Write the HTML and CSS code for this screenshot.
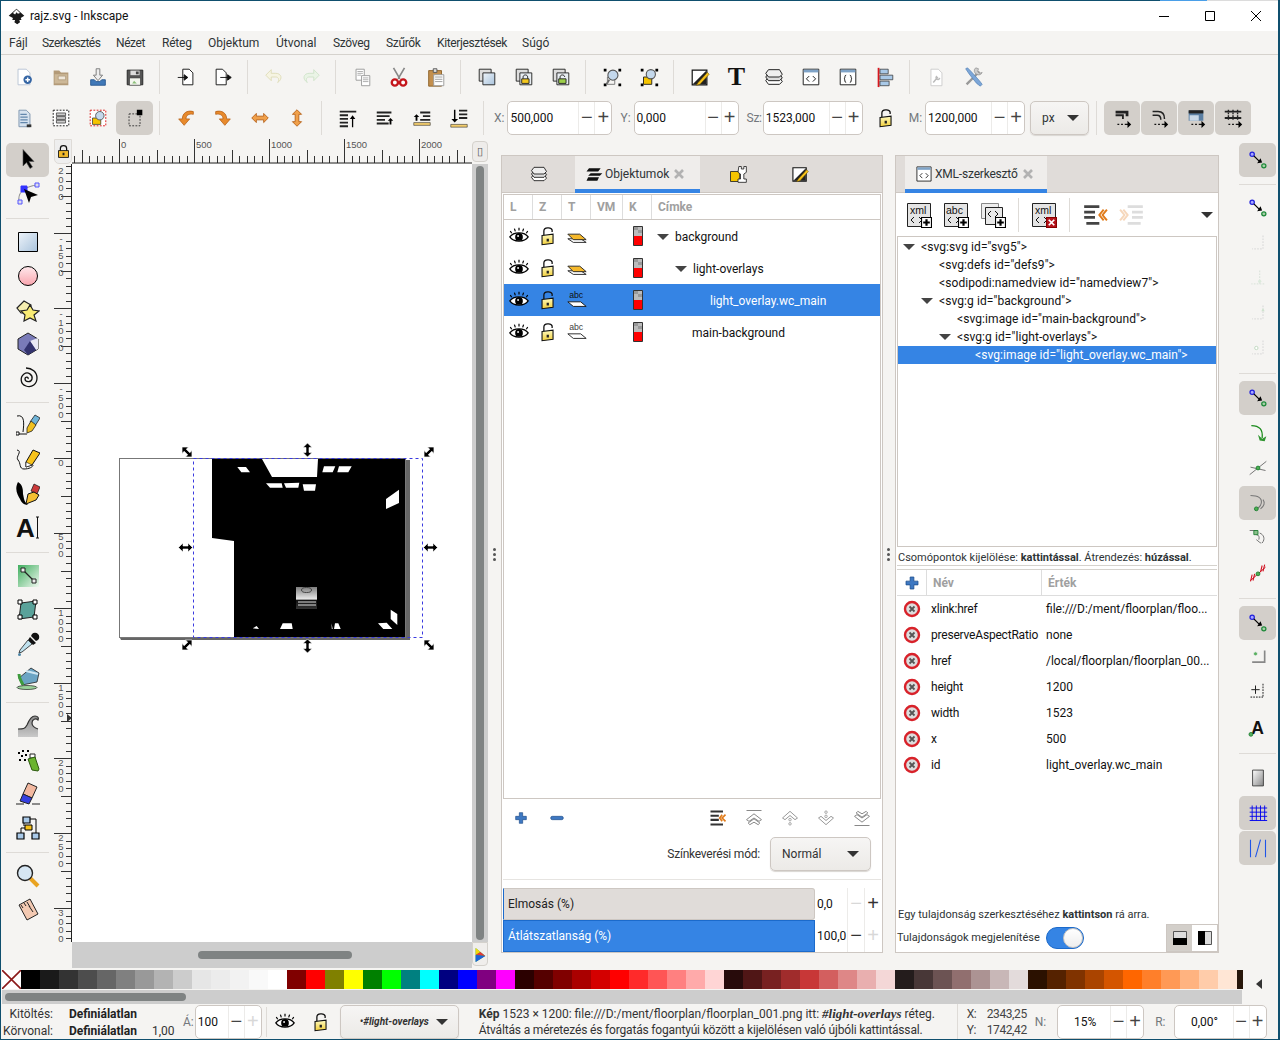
FILE: index.html
```html
<!DOCTYPE html>
<html lang="hu">
<head>
<meta charset="utf-8">
<title>rajz.svg - Inkscape</title>
<link rel="stylesheet" href="styles.css">
</head>
<body>
<svg class="defs" xmlns="http://www.w3.org/2000/svg">
<defs>
<linearGradient id="gb" x1="0" y1="0" x2="1" y2="1"><stop offset="0" stop-color="#eef4fa"/><stop offset="1" stop-color="#a9c3dc"/></linearGradient>
<linearGradient id="gg" x1="0" y1="0" x2="1" y2="1"><stop offset="0" stop-color="#3fae5e"/><stop offset="1" stop-color="#f0f8f0"/></linearGradient>
<linearGradient id="gy" x1="0" y1="0" x2="0" y2="1"><stop offset="0" stop-color="#fffbc0"/><stop offset="1" stop-color="#f2cf3a"/></linearGradient>
<linearGradient id="gr" x1="0" y1="0" x2="0" y2="1"><stop offset="0" stop-color="#ffe9ec"/><stop offset="1" stop-color="#f9a5ae"/></linearGradient>
<linearGradient id="gw" x1="0" y1="0" x2="0" y2="1"><stop offset="0" stop-color="#8c8c8c"/><stop offset="1" stop-color="#c9c9c9"/></linearGradient>
<linearGradient id="gs" x1="0" y1="0" x2="1" y2="1"><stop offset="0" stop-color="#fff"/><stop offset="1" stop-color="#888"/></linearGradient>
<linearGradient id="gp" x1="0" y1="0" x2="0" y2="1"><stop offset="0" stop-color="#7d7d7d"/><stop offset=".55" stop-color="#e8e8e8"/><stop offset=".6" stop-color="#111"/><stop offset="1" stop-color="#333"/></linearGradient>
<pattern id="rh" x="119" y="140" width="75" height="25" patternUnits="userSpaceOnUse"><path d="M0 0h1v24H0zM8 17h1v7H8zM15 17h1v7h-1zM23 17h1v7h-1zM30 17h1v7h-1zM38 11h1v13h-1zM45 17h1v7h-1zM53 17h1v7h-1zM60 17h1v7h-1zM68 17h1v7h-1z" fill="#333"/></pattern>
<pattern id="rv" x="54" y="159" width="18" height="75" patternUnits="userSpaceOnUse"><path d="M0 0h18v1H0zM12 8h6v1h-6zM12 15h6v1h-6zM12 23h6v1h-6zM12 30h6v1h-6zM7 38h11v1H7zM12 45h6v1h-6zM12 53h6v1h-6zM12 60h6v1h-6zM12 68h6v1h-6z" fill="#333"/></pattern>
<path id="ha" d="M-7 0-2.500-4.500V-1.500H2.500V-4.500L7 0 2.500 4.500V1.500H-2.500V4.500Z" fill="#000" stroke="#fff" stroke-width=".6"/>
</defs>
<symbol id="eye" viewBox="0 0 24 24"><path d="M2 13c4-6 16-6 20 0-4 6-16 6-20 0z" fill="#fff" stroke="#000" stroke-width="1.400"/><circle cx="12" cy="13" r="4.200"/><circle cx="11" cy="12" r="1" fill="#fff"/><path d="M4 9 2.500 6.500M8 7 7 4M12 6V3M16 7l1-3M20 9l1.500-2.500" stroke="#000" stroke-width="1.300"/></symbol>
<symbol id="lock" viewBox="0 0 24 24"><path d="M7.500 12V6.500c0-4 8-4.500 9-1v2" fill="none" stroke="#111" stroke-width="1.400"/><path d="M5.500 11.500l12-1.500v10l-12 1.500z" fill="url(#gy)" stroke="#111" stroke-width="1.200"/><path d="M10.500 15h2.500v3h-2.500z" fill="#222"/></symbol>
<symbol id="lockc" viewBox="0 0 24 24"><path d="M7 11V7c0-6 10-6 10 0v4" fill="none" stroke="#111" stroke-width="2"/><path d="M4 10.500h16v11H4z" fill="#f2b92a" stroke="#111" stroke-width="1.400"/><path d="M10.500 14h3v4h-3z" fill="#222"/></symbol>
<symbol id="layer" viewBox="0 0 24 24"><path d="M2 15h14l6 4H8z" fill="#fff" stroke="#222"/><path d="M2 10h13l7 6H8z" fill="#f5b82a" stroke="#222"/></symbol>
<symbol id="cbar" viewBox="0 0 10 20"><path d="M.5.5h9v19h-9z" fill="#bbb" stroke="#333"/><path d="M1 10h8v9H1z" fill="#f00"/><path d="M1 1h4v3H1zM5 4h4v3H5z" fill="#999"/></symbol>
<symbol id="new" viewBox="0 0 24 24"><path d="M5.500 3.500h9l4 4v13h-13z" fill="#fff" stroke="#b7c3d4"/><circle cx="16" cy="15" r="4.600" fill="#3465a4"/><path d="M16 12.500v5M13.500 15h5" stroke="#fff" stroke-width="1.600"/></symbol>
<symbol id="open" viewBox="0 0 24 24"><path d="M4 5h6l2 2h8v14H4z" fill="#b39a78"/><path d="M5 9h14v10H5z" fill="#cdb898"/><path d="M9 11h8v4H9z" fill="#efe7da" stroke="#9c8464" stroke-width=".6"/></symbol>
<symbol id="imp" viewBox="0 0 24 24"><path d="M10 3h4v7h3l-5 6-5-6h3z" fill="#eee" stroke="#777"/><path d="M4 15h4l2 2h4l2-2h4v6H4z" fill="#3f78b8" stroke="#2d5b92"/></symbol>
<symbol id="save" viewBox="0 0 24 24"><path d="M3.500 4.500h17v16h-17z" fill="#555" stroke="#222"/><path d="M7 5h10v5H7z" fill="#ddd"/><path d="M13 6h3v3h-3z" fill="#444"/><path d="M6 13h12v8H6z" fill="#f3f6ef" stroke="#333" stroke-width=".7"/><path d="M11 16l3 3h-5z" fill="#8cc07a"/></symbol>
<symbol id="pgin" viewBox="0 0 24 24"><path d="M8.500 3.500h7l4 4v13h-11z" fill="#fff" stroke="#111"/><path d="M3 12.500h10M10 9.500l4 3-4 3z" stroke="#111" fill="#111"/></symbol>
<symbol id="pgout" viewBox="0 0 24 24"><path d="M4.500 3.500h7l4 4v13h-11z" fill="#fff" stroke="#111"/><path d="M9 12.500h10M17 9.500l4 3-4 3z" stroke="#111" fill="#111"/></symbol>
<symbol id="undo" viewBox="0 0 24 24"><path d="M9 4 3 10l6 6v-4h5c3 0 4 3 2 6 6-4 4-10-2-10H9z" fill="#f6f4e2" stroke="#dedcb8"/></symbol>
<symbol id="redo" viewBox="0 0 24 24"><path d="M15 4l6 6-6 6v-4h-5c-3 0-4 3-2 6-6-4-4-10 2-10h5z" fill="#eaf4e6" stroke="#cfe2c9"/></symbol>
<symbol id="copy" viewBox="0 0 24 24"><path d="M5.500 3.500h9v12h-9z" fill="#fff" stroke="#999"/><path d="M11.500 10.500h9v11h-9z" fill="#fff" stroke="#999"/><path d="M7 6h6M7 8h6M7 10h4M13 13h6M13 15h6M13 17h6" stroke="#aaa"/></symbol>
<symbol id="cut" viewBox="0 0 24 24"><path d="M6 2l7 12M18 2 11 14" stroke="#888" stroke-width="1.800"/><circle cx="7.500" cy="18" r="3.400" fill="#fff" stroke="#c4161c" stroke-width="2.600"/><circle cx="16.500" cy="18" r="3.400" fill="#fff" stroke="#c4161c" stroke-width="2.600"/></symbol>
<symbol id="paste" viewBox="0 0 24 24"><path d="M4 5h14v17H4z" fill="#c38f4e" stroke="#8c6228"/><path d="M9 3h4v4H9z" fill="#ddd" stroke="#555"/><path d="M9.500 9.500h11v12h-11z" fill="#fff" stroke="#999"/><path d="M11 12h8M11 14.500h8M11 17h8" stroke="#999"/></symbol>
<symbol id="dup" viewBox="0 0 24 24"><path d="M3.500 3.500h13v13h-13z" fill="#ddd" stroke="#222"/><path d="M7.500 7.500h13v13h-13z" fill="url(#gb)" stroke="#222"/></symbol>
<symbol id="clone" viewBox="0 0 24 24"><path d="M3.500 3.500h13v13h-13z" fill="#ddd" stroke="#222"/><path d="M7.500 7.500h13v13h-13z" fill="#e8edf2" stroke="#222"/><path d="M11 14v-2c0-3 5-3 5 0v2" fill="none" stroke="#222"/><path d="M9.500 14h8v5h-8z" fill="#f4c81e" stroke="#222"/></symbol>
<symbol id="unlink" viewBox="0 0 24 24"><path d="M3.500 3.500h13v13h-13z" fill="#ddd" stroke="#222"/><path d="M7.500 7.500h13v13h-13z" fill="#e8edf2" stroke="#222"/><path d="M11 14v-2c0-3 5-3 5 0" fill="none" stroke="#222"/><path d="M9.500 14h8v5h-8z" fill="#9dcf4a" stroke="#222"/></symbol>
<symbol id="zsel" viewBox="0 0 24 24"><path d="M3 3h3v3H3zM19 3h3v3h-3zM3 19h3v3H3zM19 19h3v3h-3z"/><path d="M6 20l3-5" stroke="#666" stroke-width="2"/><path d="M7 12h8v8H7z" fill="none" stroke="#777"/><circle cx="13" cy="10" r="5.500" fill="#c4d8ec" stroke="#555" stroke-width="1.200"/></symbol>
<symbol id="zdraw" viewBox="0 0 24 24"><path d="M3 3h3v3H3zM19 3h3v3h-3zM3 19h3v3H3zM19 19h3v3h-3z"/><path d="M6 12h9v8H6z" fill="#f5c400" stroke="#222"/><circle cx="14" cy="9" r="5" fill="#c4d8ec" stroke="#555" stroke-width="1.200"/></symbol>
<symbol id="fs" viewBox="0 0 24 24"><path d="M3.500 4.500h16v16h-16z" fill="#fff" stroke="#111" stroke-width="1.300"/><path d="M4 20 19 5v15z" fill="#222"/><path d="M10 18 20 7l2 2-10 11-4 1z" fill="#f7c21a" stroke="#6a5000" stroke-width=".6"/></symbol>
<symbol id="layers" viewBox="0 0 24 24"><path d="M3 16l3-4h12l3 5-3 3H6z" fill="#fff" stroke="#111"/><path d="M3 12l3-4h12l3 5-3 3H6z" fill="#ddd" stroke="#111"/><path d="M3 8l3-4h12l3 5-3 3H6z" fill="#eee" stroke="#111"/></symbol>
<symbol id="xml" viewBox="0 0 24 24"><path d="M3.500 3.500h17v17h-17z" fill="#fff" stroke="#111"/><path d="M4 4h16v3H4z" fill="#7fa3c7"/><path d="M10 11l-3 3 3 3M14 11l3 3-3 3" fill="none" stroke="#111"/></symbol>
<symbol id="css" viewBox="0 0 24 24"><path d="M3.500 3.500h17v17h-17z" fill="#fff" stroke="#111"/><path d="M4 4h16v3H4z" fill="#7fa3c7"/><path d="M10 10c-2 0-1 3-2 4 1 1 0 4 2 4M14 10c2 0 1 3 2 4-1 1 0 4-2 4" fill="none" stroke="#111"/></symbol>
<symbol id="align" viewBox="0 0 24 24"><path d="M4 2h2v21H4z" fill="#d8171d"/><path d="M6.500 3.500h9v5h-9z" fill="#a9c9e8" stroke="#333" stroke-width=".8"/><path d="M6.500 10h14v5h-14z" fill="#a9c9e8" stroke="#333" stroke-width=".8"/><path d="M6.500 16.500h10v5h-10z" fill="#a9c9e8" stroke="#333" stroke-width=".8"/></symbol>
<symbol id="docp" viewBox="0 0 24 24"><path d="M6.500 3.500h8l4 4v14h-12z" fill="#fff" stroke="#ccc"/><path d="M9 18l5-6M13 11a2 2 0 1 0 3 2" fill="none" stroke="#bbb" stroke-width="1.600"/></symbol>
<symbol id="prefs" viewBox="0 0 24 24"><path d="M5 20 19 6" stroke="#999" stroke-width="2.500"/><path d="M15 2a4 4 0 0 0 1 7 4 4 0 0 0 6-2l-3 1-2-2 1-3z" fill="#ccc" stroke="#888" stroke-width=".7"/><path d="M4 3l2-1 4 4 9 10 3 4-2 2-4-3L8 9z" fill="#7ca6d8" stroke="#4c7cb0" stroke-width=".7"/></symbol>
<symbol id="selall" viewBox="0 0 24 24"><path d="M6.500 3.500h8l4 4v14h-12z" fill="#d6e2ef" stroke="#7c94ae"/><path d="M8 8h7M8 11h8M8 14h8M8 17h8" stroke="#6286ac" stroke-width="1.300"/><path d="M15 19h5v3h-5z" fill="#333"/></symbol>
<symbol id="sellay" viewBox="0 0 24 24"><path d="M3.500 3.500h17v17h-17z" fill="#fff" stroke="#111" stroke-dasharray="2 1.500"/><path d="M7 6.500h10v3H7zM7 10.500h10v3H7zM7 14.500h10v3H7z" fill="#ccc" stroke="#333" stroke-width=".8"/></symbol>
<symbol id="selsame" viewBox="0 0 24 24"><path d="M3.500 3.500h17v17h-17z" fill="#fff" stroke="#d11" stroke-dasharray="2 1.500"/><path d="M6 12h9v7H6z" fill="#f5c400" stroke="#333" stroke-width=".8"/><circle cx="14" cy="9.500" r="4.600" fill="#c4d8ec" stroke="#555"/></symbol>
<symbol id="selto" viewBox="0 0 24 24"><path d="M5.500 7.500h12v13h-12z" fill="none" stroke="#333" stroke-dasharray="2 1.500"/><path d="M14 3h6v6h-6z"/></symbol>
<symbol id="rccw" viewBox="0 0 24 24"><path d="M20 5c-7-2-12 2-12 8H4l6 7 6-7h-4c0-4 3-6 8-5z" fill="#e88a2c" stroke="#b25a10" stroke-width=".8"/></symbol>
<symbol id="rcw" viewBox="0 0 24 24"><path d="M4 5c7-2 12 2 12 8h4l-6 7-6-7h4c0-4-3-6-8-5z" fill="#e88a2c" stroke="#b25a10" stroke-width=".8"/></symbol>
<symbol id="fh" viewBox="0 0 24 24"><path d="M3 12l5-5v3h8V7l5 5-5 5v-3H8v3z" fill="#f0a04a" stroke="#b25a10" stroke-width=".9"/></symbol>
<symbol id="fv" viewBox="0 0 24 24"><path d="M12 3l5 5h-3v8h3l-5 5-5-5h3V8H7z" fill="#f0a04a" stroke="#b25a10" stroke-width=".9"/></symbol>
<symbol id="rtop" viewBox="0 0 24 24"><path d="M3 4h18v2H3zM3 8h9v2H3zM3 12h9v2H3zM3 16h9v2H3zM3 20h9v2H3z" fill="#222"/><path d="M17 9l3 4h-2.300v9h-1.400v-9H14z"/></symbol>
<symbol id="rup" viewBox="0 0 24 24"><path d="M3 5h16v2H3zM3 9h14v2H3zM3 13h9v2H3zM3 17h13v2H3z" fill="#222"/><path d="M18 12l3 3h-2v4h-2v-4h-2z"/></symbol>
<symbol id="rdn" viewBox="0 0 24 24"><path d="M10 5h11v2H10zM13 9h8v2h-8zM10 13h11v2H10z" fill="#222"/><path d="M3 17h18v3H3z" fill="#f3cd6d" stroke="#222" stroke-width=".6"/><path d="M6 8l-3 3h2v4h2v-4h2z"/></symbol>
<symbol id="rbot" viewBox="0 0 24 24"><path d="M12 3h9v2h-9zM12 7h9v2h-9zM12 11h9v2h-9z" fill="#222"/><path d="M3 19h18v3H3z" fill="#f3cd6d" stroke="#222" stroke-width=".6"/><path d="M6.500 3h1.600v10H11l-3.700 4-3.600-4h2.800z"/></symbol>
<symbol id="aff1" viewBox="0 0 24 24"><path d="M5 4h14v6h-3V7H5zM5 8h9v5h-2v-3H5z" fill="#222"/><path d="M7 19h2M11 19h2M15 19h4" stroke="#111" stroke-width="1.300"/><path d="M18 15l4 4-4 4z"/></symbol>
<symbol id="aff2" viewBox="0 0 24 24"><path d="M5 5h6c5 0 7 3 7 8M5 9h5c3 0 4 2 4 5" fill="none" stroke="#222" stroke-width="1.600"/><path d="M7 19h2M11 19h2M15 19h4" stroke="#111" stroke-width="1.300"/><path d="M18 15l4 4-4 4z"/></symbol>
<symbol id="aff3" viewBox="0 0 24 24"><path d="M4 4h16v11H4z" fill="#5b7fa3"/><path d="M5 9h10v6H5z" fill="#c9d8e7"/><path d="M4 3.500h16V7H4z" fill="#222"/><path d="M7 19h2M11 19h2M15 19h4" stroke="#111" stroke-width="1.300"/><path d="M18 15l4 4-4 4z"/></symbol>
<symbol id="aff4" viewBox="0 0 24 24"><path d="M3 4h18v2H3zM3 11h18v2H3z" fill="#222"/><path d="M7 3v12M12 3v12M17 3v12" stroke="#222" stroke-width="1.500" stroke-dasharray="2 1"/><path d="M7 19h2M11 19h2M15 19h4" stroke="#111" stroke-width="1.300"/><path d="M18 15l4 4-4 4z"/></symbol>
<symbol id="t-sel" viewBox="0 0 24 24"><path d="M7 1.500v16.500l3.500-3.500 3.500 6 2.500-1.500-3.500-5.500h5z" stroke="#555" stroke-width=".6"/></symbol>
<symbol id="t-node" viewBox="0 0 24 24"><path d="M3 20C2 12 5 6 20 3" fill="none" stroke="#888"/><path d="M5 4h6v6H5z" fill="#3333ff" stroke="#3333ff"/><path d="M2 18h4v4H2zM19 1h4v4h-4z" fill="#dde" stroke="#55f"/><path d="M8 7l5 14 2-6 7-2z"/></symbol>
<symbol id="t-rect" viewBox="0 0 24 24"><path d="M2.500 2.500h19v19h-19z" fill="url(#gb)" stroke="#000"/></symbol>
<symbol id="t-ell" viewBox="0 0 24 24"><circle cx="12" cy="12" r="9.500" fill="url(#gr)" stroke="#000"/></symbol>
<symbol id="t-star" viewBox="0 0 24 24"><path d="M1 10l7-7 7 4-1 8H5z" fill="#f6eeb0" stroke="#222" stroke-width="1.200"/><path d="M14 7l3 5 6 1-5 4 2 6-6-3-6 3 1-6-4-4 6-1z" fill="#f9ec74" stroke="#222" stroke-width="1.200"/></symbol>
<symbol id="t-3d" viewBox="0 0 24 24"><path d="M12 1l10 6v10l-10 6-10-6V7z" fill="#7a7bb8" stroke="#222"/><path d="M14 9l8-3v11l-2 1z" fill="#e8e8f4"/><path d="M8 18l6-9 6 9-8 5z" fill="#33336e"/></symbol>
<symbol id="t-spi" viewBox="0 0 24 24"><path d="M12 13c1-2-3-3-3 0s6 4 7 0-4-8-8-5-4 10 2 12 11-2 11-8S16 2 10 2" fill="none" stroke="#111" stroke-width="1.300"/></symbol>
<symbol id="t-pen" viewBox="0 0 24 24"><path d="M1 2c8-2 7 8 6 16" fill="none" stroke="#111"/><path d="M0 18h3v3H0z" fill="#fff" stroke="#111"/><path d="M3 20h8" stroke="#111"/><path d="M14 8l5-7 5 3-5 8z" fill="#6fb4d8" stroke="#222" stroke-width=".8"/><path d="M11 14l4-7 5 4-4 6-5 2z" fill="#f0c020" stroke="#222" stroke-width=".8"/></symbol>
<symbol id="t-pcl" viewBox="0 0 24 24"><path d="M1 2c6 1-2 7 1 10s1 9 6 9 9-2 9-4" fill="none" stroke="#111"/><path d="M10 14l7-12 7 3-8 12-6 2z" fill="#f7c21a" stroke="#111"/><path d="M10 14l6 3-6 2z" fill="#fff" stroke="#111" stroke-width=".6"/></symbol>
<symbol id="t-cal" viewBox="0 0 24 24"><path d="M2 0c-4 8 0 13 2 17 1 3 4 6 8 6-4-3-4-7-5-11 0-4 0-9-5-12z"/><path d="M15 9l3-7 6 3-3 7z" fill="#cc3a3a" stroke="#111" stroke-width=".7"/><path d="M10 22l2-10 6-2 5 3-3 5z" fill="#f5bf33" stroke="#111"/></symbol>
<symbol id="t-grad" viewBox="0 0 24 24"><path d="M2 1h21v22H2z" fill="url(#gg)"/><path d="M7 6l11 11" stroke="#222" stroke-width="1.300"/><path d="M5 4h4v4H5zM16 15h4v4h-4z" fill="#eee" stroke="#222"/></symbol>
<symbol id="t-mesh" viewBox="0 0 24 24"><path d="M5 5l15-2-2 16-15 2z" fill="#5aa29a" stroke="#222"/><path d="M2 2h4v4H2zM17 2h4v4h-4zM2 17h4v4H2zM17 17h4v4h-4z" fill="#fff" stroke="#000"/></symbol>
<symbol id="t-drop" viewBox="0 0 24 24"><path d="M14 5l6 6-3 2-5-5z" fill="#111"/><path d="M16 2a3 3 0 0 1 6 6l-2 1-5-5z" fill="#111"/><path d="M12 8l4 4-10 8-3 1 1-3z" fill="#bfe1ee" stroke="#222" stroke-width=".8"/><ellipse cx="3.500" cy="22.500" rx="1.500" ry="1.500" fill="#4f86a6"/></symbol>
<symbol id="t-fill" viewBox="0 0 24 24"><path d="M3 12l3 7 15-3 2-9-8-5z" fill="#6ba4c4" stroke="#222" stroke-width=".8"/><path d="M10 5l12 3" stroke="#cfe6f2" stroke-width="2"/><path d="M3 8c0 5 2 6 4 11" fill="none" stroke="#3e9b3e" stroke-width="3"/><ellipse cx="11" cy="21.500" rx="10" ry="2" fill="#9ad29a" stroke="#222" stroke-width=".7"/></symbol>
<symbol id="t-twk" viewBox="0 0 24 24"><path d="M2 23V15c5 0 7 0 9-4 2-5 4-9 8-9 3 0 4 2 3 4-2-2-6-1-6 3 0 3 3 5 6 6v8z" fill="url(#gw)"/><path d="M2 15c5 0 7 0 9-4 2-5 4-9 8-9 3 0 4 2 3 4-2-2-6-1-6 3 0 3 3 5 6 6" fill="none" stroke="#333" stroke-width="1.200"/></symbol>
<symbol id="t-spr" viewBox="0 0 24 24"><path d="M2 4h2v2H2zM6 2h2v2H6zM5 7h2v2H5zM9 6h2v2H9zM3 11h2v2H3zM8 11h2v2H8zM11 2h2v2h-2z"/><path d="M14 6h5v4h-5z" fill="#fff" stroke="#222"/><path d="M12 11l7-2 4 12-1 2-6-1z" fill="#6ab42e" stroke="#2d5a10"/></symbol>
<symbol id="t-era" viewBox="0 0 24 24"><path d="M12 1l9 4-5 11-9-4z" fill="#f2b8a0" stroke="#222"/><path d="M7 12l9 4-3 6-9-3z" fill="#3640e0" stroke="#222"/><path d="M0 22h8M16 22h8" stroke="#222"/></symbol>
<symbol id="t-conn" viewBox="0 0 24 24"><path d="M7 1h7v6H7zM1 17h7v6H1zM16 17h7v6h-7z" fill="#a9c9e8" stroke="#000" stroke-width="1.200"/><path d="M9 9h7v5H9z" fill="#f7c21a" stroke="#000"/><path d="M8 7v3M5 17v-5h4M14 3h6v14" fill="none" stroke="#000"/></symbol>
<symbol id="t-zoom" viewBox="0 0 24 24"><path d="M14 14l8 8" stroke="#e9a321" stroke-width="4"/><circle cx="9" cy="9" r="7.500" fill="#d6e6f3" stroke="#222" stroke-width="1.400"/></symbol>
<symbol id="t-meas" viewBox="0 0 24 24"><path d="M3 7l11-6 8 15-11 6z" fill="#f3c9b2" stroke="#222"/><path d="M5 7l2 3M8 5l2 3M11 4l3 5M13 8l2 3M15 11l2 3" stroke="#222"/></symbol>
<symbol id="pl" viewBox="0 0 24 24"><path d="M9.500 4h5v5.500H20v5h-5.500V20h-5v-5.500H4v-5h5.500z" fill="#3e78c2" stroke="#1c4c8a"/></symbol>
<symbol id="mn" viewBox="0 0 24 24"><path d="M5 9.500h14a2 2 0 0 1 0 5H5a2 2 0 0 1 0-5z" fill="#3e78c2" stroke="#1c4c8a"/></symbol>
<symbol id="wnd" viewBox="0 0 24 24"><path d="M3 3h15v2.500H3zM3 8h10v2.500H3zM3 13h10v2.500H3zM3 18.500h15V21H3z" fill="#333"/><path d="M21 8l-4 4 4 4M17 8l-3 4 3 4" fill="none" stroke="#e07b1a" stroke-width="2"/></symbol>
<symbol id="otop" viewBox="0 0 24 24"><path d="M3 3h18M12 7l9 7-3 2-6-4-6 4-3-2zM12 13l7 5-2 2-5-3-5 3-2-2z" fill="#fff" stroke="#888" stroke-width="1.200"/></symbol>
<symbol id="oup" viewBox="0 0 24 24"><path d="M12 4l9 8-3 2-6-5-6 5-3-2z" fill="#fff" stroke="#999" stroke-width="1.200"/><circle cx="12" cy="14" r="1.500" fill="#fff" stroke="#999"/><circle cx="12" cy="19" r="1.500" fill="#fff" stroke="#999"/></symbol>
<symbol id="odn" viewBox="0 0 24 24"><path d="M12 20l9-8-3-2-6 5-6-5-3 2z" fill="#fff" stroke="#999" stroke-width="1.200"/><circle cx="12" cy="10" r="1.500" fill="#fff" stroke="#999"/><circle cx="12" cy="5" r="1.500" fill="#fff" stroke="#999"/></symbol>
<symbol id="obot" viewBox="0 0 24 24"><path d="M3 21h18M12 17l9-7-3-2-6 4-6-4-3 2zM12 11l7-5-2-2-5 3-5-3-2 2z" fill="#fff" stroke="#888" stroke-width="1.200"/></symbol>
<symbol id="objs" viewBox="0 0 24 24"><path d="M6 5h14l-3 4H3zM8 11h14l-3 3H5zM5 16h13l-2 4H3z" fill="#111"/></symbol>
<symbol id="objp" viewBox="0 0 24 24"><path d="M3 9h11v12H3z" fill="#f5c400" stroke="#222"/><path d="M13 3h3v3h3V3h3v7l-3 2v6h3v4H12v-4h3v-6l-3-2z" fill="#fff" stroke="#222"/></symbol>
<symbol id="xd" viewBox="0 0 26 26"><path d="M1.500 1.500h17v15h-17z" fill="#eee" stroke="#888"/><path d="M5.500 5.500h17v17h-17z" fill="#e8e8e8" stroke="#222"/><path d="M11 9l-3 3 3 3M15 9l3 3-3 3" fill="none" stroke="#111"/></symbol>
<symbol id="badge" viewBox="0 0 10 10"><path d="M.5.5h9v9h-9z" fill="#fff" stroke="#000"/><path d="M4 2h2v2h2v2H6v2H4V6H2V4h2z"/></symbol>
<symbol id="xdel" viewBox="0 0 10 10"><path d="M.5.5h9v9h-9z" fill="#b5121b" stroke="#800"/><path d="M2.500 2.500l5 5M7.500 2.500l-5 5" stroke="#fff" stroke-width="1.600"/></symbol>
<symbol id="un" viewBox="0 0 24 24"><path d="M2 3h14v2.500H2zM2 8h10v2.500H2zM2 13h10v2.500H2zM4 18.500h12V21H4z" fill="#444"/><path d="M20 7l-4 5 4 5M23 7l-4 5 4 5" fill="none" stroke="#e07b1a" stroke-width="1.800"/></symbol>
<symbol id="in" viewBox="0 0 24 24"><path d="M8 3h14v2.500H8zM12 8h10v2.500H12zM12 13h10v2.500H12zM8 18.500h12V21H8z" fill="#ddd"/><path d="M4 7l4 5-4 5M1 7l4 5-4 5" fill="none" stroke="#f6d7bb" stroke-width="1.800"/></symbol>
<symbol id="del" viewBox="0 0 24 24"><circle cx="12" cy="12" r="7" fill="#ddd" stroke="#d8222a" stroke-width="2.400"/><path d="M9.500 9.500l5 5M14.500 9.500l-5 5" stroke="#555" stroke-width="1.800"/></symbol>
<symbol id="s-main" viewBox="0 0 24 24"><circle cx="5" cy="5" r="2.600" fill="#a8a8ff" stroke="#2222dd" stroke-width="1.500"/><circle cx="19" cy="19" r="2.500" fill="#a8d0a8" stroke="#1f8a3a" stroke-width="1.500"/><path d="M7 7l7 7"  stroke="#000" stroke-width="1.500"/><path d="M11 16l6-1-2-5z"/></symbol>
<symbol id="s-f1" viewBox="0 0 24 24"><path d="M18 3v16H5" fill="none" stroke="#ddd" stroke-dasharray="2 1.500" stroke-width="1.500"/></symbol>
<symbol id="s-f2" viewBox="0 0 24 24"><path d="M14 3v16H4M14 19h7" fill="none" stroke="#dde5dd" stroke-dasharray="2 1.500" stroke-width="1.500"/><circle cx="14" cy="16" r="2" fill="#dceadc"/></symbol>
<symbol id="s-f3" viewBox="0 0 24 24"><path d="M18 3v16H5" fill="none" stroke="#ddd" stroke-dasharray="2 1.500" stroke-width="1.500"/><path d="M18 6l2 4h-4z" fill="#cfe3cf"/></symbol>
<symbol id="s-f4" viewBox="0 0 24 24"><path d="M18 3v16H5" fill="none" stroke="#ddd" stroke-dasharray="2 1.500" stroke-width="1.500"/><circle cx="10" cy="12" r="2" fill="#fff" stroke="#b8d4b8"/></symbol>
<symbol id="s-p" viewBox="0 0 24 24"><path d="M4 3c10 0 14 5 13 15" fill="none" stroke="#1a8a1a" stroke-width="1.500"/><path d="M12 14l5 5 5-3-2 6-6-1z" fill="#1a8a1a" opacity=".9"/></symbol>
<symbol id="s-x" viewBox="0 0 24 24"><path d="M2 20 22 4M3 11l18 4" stroke="#777" stroke-width="1.200"/><circle cx="12" cy="12" r="2.300" fill="#4caf50" stroke="#177a2c"/></symbol>
<symbol id="s-c" viewBox="0 0 24 24"><path d="M3 3c9 0 14 3 13 9-1 5-5 7-7 7M18 8c3 4 1 8-3 11" fill="none" stroke="#777" stroke-width="1.300"/><circle cx="10" cy="19" r="2.300" fill="#4caf50" stroke="#177a2c"/></symbol>
<symbol id="s-b" viewBox="0 0 24 24"><path d="M2 3h8v5c3 0 4 3 3 6M14 6c5 2 7 7 3 12M10 14c3 2 4 4 6 4" fill="none" stroke="#777" stroke-width="1.200"/><path d="M7 3h5v5H7z" fill="#8ac08a" stroke="#177a2c"/></symbol>
<symbol id="s-r" viewBox="0 0 24 24"><path d="M3 21 21 5" stroke="#d01020" stroke-width="1.200"/><path d="M5 14l-2 8M8 13l-2 8M17 3l-2 8M20 2l-2 8" stroke="#d01020" stroke-width="1.300"/><circle cx="12" cy="13" r="2.300" fill="#4caf50" stroke="#177a2c"/></symbol>
<symbol id="s-pg" viewBox="0 0 24 24"><path d="M20 3v14H5" fill="none" stroke="#888" stroke-width="2"/><circle cx="9" cy="7" r="2.400" fill="#58b05f" stroke="#eee"/></symbol>
<symbol id="s-gd" viewBox="0 0 24 24"><path d="M9 3v10M4 8h10" stroke="#222" stroke-width="1.200"/><path d="M18 1v16M3 17h15" stroke="#777" stroke-width="2" stroke-dasharray="2 1.300"/></symbol>
<symbol id="s-page" viewBox="0 0 24 24"><path d="M5.500 2.500h13v19h-13z" fill="url(#gs)" stroke="#333"/></symbol>
<symbol id="s-grid" viewBox="0 0 24 24"><path d="M5 3v18M10 3v18M15 3v18M20 3v18M2 6h21M2 11h21M2 16h21M2 21h21" stroke="#0000ee" stroke-width="1.100"/></symbol>
<symbol id="s-guide" viewBox="0 0 24 24"><path d="M3 2v21M21 2v21M9 23 15 2" stroke="#1f55e8" stroke-width="1.300"/></symbol>
<symbol id="logo" viewBox="0 0 24 24"><path d="M12 1 23 11l-5 3 1 3h-3l1 3-4 3-4-3 1-3H6l1-3-6-3z" fill="#1a1a1a"/><path d="M12 2l5 5-3 1-2-2-2 3-3-2z" fill="#fff"/></symbol>
<symbol id="xic" viewBox="0 0 12 12"><path d="M2 2l8 8M10 2l-8 8" stroke="#b2b2b2" stroke-width="2.600"/></symbol>
</svg>

<div class="app">
<div class="edge"><span class="e1"></span><span class="e2"></span></div>
<header class="title">
<svg class="logo"><use href="#logo"/></svg>
<span class="ttext">rajz.svg - Inkscape</span>
<div class="wctl">
<svg class="wc" viewBox="0 0 46 30"><path d="M18 15.500h10" stroke="#000"/></svg>
<svg class="wc" viewBox="0 0 46 30"><path d="M18.500 10.500h9v9h-9z" fill="none" stroke="#000"/></svg>
<svg class="wc" viewBox="0 0 46 30"><path d="M18 10l10 10M28 10 18 20" stroke="#000"/></svg>
</div>
</header>
<nav class="menu"><span>Fájl</span><span>Szerkesztés</span><span>Nézet</span><span>Réteg</span><span>Objektum</span><span>Útvonal</span><span>Szöveg</span><span>Szűrők</span><span>Kiterjesztések</span><span>Súgó</span></nav>

<div class="tb tb1">
<i class="b"><svg><use href="#new"/></svg></i><i class="b"><svg><use href="#open"/></svg></i><i class="b"><svg><use href="#imp"/></svg></i><i class="b"><svg><use href="#save"/></svg></i>
<u class="sep"></u>
<i class="b"><svg><use href="#pgin"/></svg></i><i class="b"><svg><use href="#pgout"/></svg></i>
<u class="sep"></u>
<i class="b"><svg><use href="#undo"/></svg></i><i class="b"><svg><use href="#redo"/></svg></i>
<u class="sep"></u>
<i class="b"><svg><use href="#copy"/></svg></i><i class="b"><svg><use href="#cut"/></svg></i><i class="b"><svg><use href="#paste"/></svg></i>
<u class="sep"></u>
<i class="b"><svg><use href="#dup"/></svg></i><i class="b"><svg><use href="#clone"/></svg></i><i class="b"><svg><use href="#unlink"/></svg></i>
<u class="sep"></u>
<i class="b"><svg><use href="#zsel"/></svg></i><i class="b"><svg><use href="#zdraw"/></svg></i>
<u class="sep"></u>
<i class="b"><svg><use href="#fs"/></svg></i><i class="b"><span class="bigt">T</span></i><i class="b"><svg><use href="#layers"/></svg></i><i class="b"><svg><use href="#xml"/></svg></i><i class="b"><svg><use href="#css"/></svg></i><i class="b"><svg><use href="#align"/></svg></i>
<u class="sep"></u>
<i class="b"><svg><use href="#docp"/></svg></i><i class="b"><svg><use href="#prefs"/></svg></i>
</div>

<div class="tb tb2">
<i class="b"><svg><use href="#selall"/></svg></i><i class="b"><svg><use href="#sellay"/></svg></i><i class="b"><svg><use href="#selsame"/></svg></i><i class="b on"><svg><use href="#selto"/></svg></i>
<u class="sep"></u>
<i class="b"><svg><use href="#rccw"/></svg></i><i class="b"><svg><use href="#rcw"/></svg></i><i class="b"><svg><use href="#fh"/></svg></i><i class="b"><svg><use href="#fv"/></svg></i>
<u class="sep sep2"></u>
<i class="b"><svg><use href="#rtop"/></svg></i><i class="b"><svg><use href="#rup"/></svg></i><i class="b"><svg><use href="#rdn"/></svg></i><i class="b"><svg><use href="#rbot"/></svg></i>
<u class="sep sep3"></u>
<label class="lb lbx">X:</label><div class="spin sx"><span class="v">500,000</span><b class="m">−</b><b class="p">+</b></div>
<label class="lb">Y:</label><div class="spin sx"><span class="v">0,000</span><b class="m">−</b><b class="p">+</b></div>
<label class="lb lbs">Sz:</label><div class="spin swd"><span class="v">1523,000</span><b class="m">−</b><b class="p">+</b></div>
<i class="b blk"><svg><use href="#lock"/></svg></i>
<label class="lb lbm">M:</label><div class="spin swd"><span class="v">1200,000</span><b class="m">−</b><b class="p">+</b></div>
<div class="sel pxs"><span>px</span><em class="arr"></em></div>
<u class="sep sep4"></u>
<i class="b af on"><svg><use href="#aff1"/></svg></i><i class="b af on"><svg><use href="#aff2"/></svg></i><i class="b af on"><svg><use href="#aff3"/></svg></i><i class="b af on"><svg><use href="#aff4"/></svg></i>
</div>

<main class="main">
<aside class="lt">
<i class="t on"><svg><use href="#t-sel"/></svg></i>
<i class="t"><svg><use href="#t-node"/></svg></i>
<u class="hs"></u>
<i class="t"><svg><use href="#t-rect"/></svg></i><i class="t"><svg><use href="#t-ell"/></svg></i><i class="t"><svg><use href="#t-star"/></svg></i><i class="t"><svg><use href="#t-3d"/></svg></i><i class="t"><svg><use href="#t-spi"/></svg></i>
<u class="hs"></u>
<i class="t"><svg><use href="#t-pen"/></svg></i><i class="t"><svg><use href="#t-pcl"/></svg></i><i class="t"><svg><use href="#t-cal"/></svg></i><i class="t"><svg class="tall" viewBox="0 -4 24 32"><text x="0" y="21" class="glyph-a">A</text><path d="M20 1h3M21.500 1v21M20 22h3" stroke="#111" fill="none"/></svg></i>
<u class="hs"></u>
<i class="t"><svg><use href="#t-grad"/></svg></i><i class="t"><svg><use href="#t-mesh"/></svg></i><i class="t"><svg><use href="#t-drop"/></svg></i><i class="t"><svg><use href="#t-fill"/></svg></i>
<u class="hs"></u>
<i class="t"><svg><use href="#t-twk"/></svg></i><i class="t"><svg><use href="#t-spr"/></svg></i><i class="t"><svg><use href="#t-era"/></svg></i><i class="t"><svg><use href="#t-conn"/></svg></i>
<u class="hs"></u>
<i class="t"><svg><use href="#t-zoom"/></svg></i><i class="t"><svg><use href="#t-meas"/></svg></i>
</aside>

<section class="cv">
<div class="lockb"><svg><use href="#lockc"/></svg></div>
<svg class="rh" viewBox="72 140 400 25">
<rect x="72" y="140" width="400" height="24" fill="url(#rh)"/><path d="M72 164h400" stroke="#222"/>
<g class="rt"><text x="121" y="149">0</text><text x="196" y="149">500</text><text x="271" y="149">1000</text><text x="346" y="149">1500</text><text x="421" y="149">2000</text></g>
</svg>
<div class="cms"><span class="cmsi">▯</span></div>
<svg class="rv" viewBox="54 165 18 778">
<rect x="54" y="165" width="18" height="778" fill="url(#rv)"/><path d="M71.500 165v778" stroke="#222"/>
<g class="rt vt">
<text x="61" y="175">2<tspan x="61" dy="8.500">0</tspan><tspan x="61" dy="8.500">0</tspan><tspan x="61" dy="8.500">0</tspan></text>
<text x="61" y="243">-<tspan x="61" dy="8.500">1</tspan><tspan x="61" dy="8.500">5</tspan><tspan x="61" dy="8.500">0</tspan><tspan x="61" dy="8.500">0</tspan></text>
<text x="61" y="318">-<tspan x="61" dy="8.500">1</tspan><tspan x="61" dy="8.500">0</tspan><tspan x="61" dy="8.500">0</tspan><tspan x="61" dy="8.500">0</tspan></text>
<text x="61" y="393">-<tspan x="61" dy="8.500">5</tspan><tspan x="61" dy="8.500">0</tspan><tspan x="61" dy="8.500">0</tspan></text>
<text x="61" y="467">0</text>
<text x="61" y="541">5<tspan x="61" dy="8.500">0</tspan><tspan x="61" dy="8.500">0</tspan></text>
<text x="61" y="617">1<tspan x="61" dy="8.500">0</tspan><tspan x="61" dy="8.500">0</tspan><tspan x="61" dy="8.500">0</tspan></text>
<text x="61" y="692">1<tspan x="61" dy="8.500">5</tspan><tspan x="61" dy="8.500">0</tspan><tspan x="61" dy="8.500">0</tspan></text>
<text x="61" y="767">2<tspan x="61" dy="8.500">0</tspan><tspan x="61" dy="8.500">0</tspan><tspan x="61" dy="8.500">0</tspan></text>
<text x="61" y="842">2<tspan x="61" dy="8.500">5</tspan><tspan x="61" dy="8.500">0</tspan><tspan x="61" dy="8.500">0</tspan></text>
<text x="61" y="917">3<tspan x="61" dy="8.500">0</tspan><tspan x="61" dy="8.500">0</tspan><tspan x="61" dy="8.500">0</tspan></text>
</g>
<path d="M67 715v8l5-4z" fill="#333"/>
</svg>
<svg class="art" viewBox="72 165 400 778">
<path d="M120 639h286V461h4v180H121z" fill="#666"/>
<rect x="119.500" y="459.500" width="286" height="179" fill="#fff" stroke="#777"/>
<path d="M212 460H262L272 478H317L318 460H405V638H234V542L212 539Z"/>
<path fill="#fff" d="M237.300 468H246L250 473.300H241.300ZM324 467.300H335.300L332.700 473.300H322.300ZM339 467.300H351.700L348.300 473.300H337.300ZM266 484.300H281.700L282.700 488.700H270ZM284 484.300 299.300 483.700 298.300 488.700H286ZM302.700 485.300H316L315 491.700H304ZM386 500 399 490.700V504L386 510ZM252.700 629.300 256.700 627 259 630ZM280 630 282.700 624.300H291.700L292.700 630ZM335 624.300H338.300L340.700 630H334ZM331.500 624.300 332.700 630H331.800ZM378 624.300 386.700 623.700 392.300 630H383.300ZM390.700 610.700 397.300 615V626L390.700 620Z"/>
<rect x="296" y="588" width="21" height="22" fill="url(#gp)"/>
<ellipse cx="306.500" cy="591" rx="5" ry="2.500" fill="none" stroke="#444"/><path d="M298 603h18M298 606h18" stroke="#ddd"/>
<rect x="193.500" y="459.500" width="229" height="179" fill="none" stroke="#3a3ae0" stroke-dasharray="3 3"/>
<use href="#ha" transform="translate(187 453) rotate(45)"/>
<use href="#ha" transform="translate(429 453) rotate(-45)"/>
<use href="#ha" transform="translate(187 646) rotate(-45)"/>
<use href="#ha" transform="translate(429 646) rotate(45)"/>
<use href="#ha" transform="translate(307.500 451) rotate(90)"/>
<use href="#ha" transform="translate(307.500 647) rotate(90)"/>
<use href="#ha" transform="translate(185.500 548.500)"/>
<use href="#ha" transform="translate(430.500 548.500)"/>
</svg>
<div class="vs"><em></em></div>
<div class="gutter"></div>
<div class="hsb"><em></em></div>
<div class="cmg"><svg viewBox="0 0 16 20"><path d="M3 2l11 9L3 18z" fill="#25b34b"/><path d="M3 2l5.500 4.500L3 10z" fill="#f5d90a"/><path d="M3 10l5.500-3.500L14 11z" fill="#e53935"/><path d="M3 10l11 1L3 18z" fill="#1e60d8"/></svg></div>
</section>

<div class="gp g1"><span></span><span></span><span></span></div>

<section class="panel p1">
<div class="tabs">
<div class="tab t1"><svg><use href="#layers"/></svg></div>
<div class="tab act t2"><svg class="s24"><use href="#objs"/></svg><span>Objektumok</span><em class="tx"><svg class="xic"><use href="#xic"/></svg></em></div>
<div class="tab t3"><svg><use href="#objp"/></svg></div>
<div class="tab t4"><svg><use href="#fs"/></svg></div>
</div>
<div class="listf">
<div class="hd"><span>L</span><span>Z</span><span>T</span><span>VM</span><span>K</span><span>Címke</span></div>
<div class="rw"><span><svg><use href="#eye"/></svg></span><span><svg><use href="#lock"/></svg></span><span><svg><use href="#layer"/></svg></span><span></span><span><svg class="cb"><use href="#cbar"/></svg></span><span class="lbl d0"><em class="tri"></em>background</span></div>
<div class="rw"><span><svg><use href="#eye"/></svg></span><span><svg><use href="#lock"/></svg></span><span><svg><use href="#layer"/></svg></span><span></span><span><svg class="cb"><use href="#cbar"/></svg></span><span class="lbl d1"><em class="tri"></em>light-overlays</span></div>
<div class="rw sel-r"><span><svg><use href="#eye"/></svg></span><span><svg><use href="#lock"/></svg></span><span><svg viewBox="0 0 24 24"><text x="3.500" y="10" class="glyph-abc dk">abc</text><path d="M2 14h14l6 5H8z" fill="#fff" stroke="#111"/></svg></span><span></span><span><svg class="cb"><use href="#cbar"/></svg></span><span class="lbl d2">light_overlay.wc_main</span></div>
<div class="rw"><span><svg><use href="#eye"/></svg></span><span><svg><use href="#lock"/></svg></span><span><svg viewBox="0 0 24 24"><text x="3.500" y="10" class="glyph-abc">abc</text><path d="M2 14h14l6 5H8z" fill="#fff" stroke="#222"/></svg></span><span></span><span><svg class="cb"><use href="#cbar"/></svg></span><span class="lbl d3">main-background</span></div>
</div>
<div class="actions">
<i class="a a16"><svg><use href="#pl"/></svg></i><i class="a a16"><svg><use href="#mn"/></svg></i><span class="fl"></span>
<i class="a"><svg><use href="#wnd"/></svg></i><i class="a"><svg><use href="#otop"/></svg></i><i class="a"><svg><use href="#oup"/></svg></i><i class="a"><svg><use href="#odn"/></svg></i><i class="a"><svg><use href="#obot"/></svg></i>
</div>
<div class="blend"><span class="bl">Színkeverési mód:</span><div class="sel ns"><span>Normál</span><em class="arr"></em></div></div>
<hr class="ln">
<div class="slid s-off"><div class="bar"><span>Elmosás (%)</span></div><span class="num">0,0</span><b class="m fa">−</b><b class="p">+</b></div>
<div class="slid s-on"><div class="bar"><span>Átlátszatlanság (%)</span></div><span class="num">100,0</span><b class="m">−</b><b class="p fa">+</b></div>
</section>

<div class="gp g2"><span></span><span></span><span></span></div>

<section class="panel p2">
<div class="tabs tabs2">
<div class="tab act t5"><svg class="s24"><use href="#xml"/></svg><span>XML-szerkesztő</span><em class="tx"><svg class="xic"><use href="#xic"/></svg></em></div>
</div>
<div class="xtool">
<i class="x"><svg viewBox="0 0 26 26"><path d="M1.500 1.500h23v23h-23z" fill="#e4e4e4" stroke="#222"/><text x="4" y="12" class="glyph-x">xml</text><path d="M8 15l-3 3 3 3M13 15l3 3-3 3" fill="none" stroke="#111"/><use href="#badge" x="15" y="15" width="11" height="11"/></svg></i>
<i class="x"><svg viewBox="0 0 26 26"><path d="M1.500 1.500h23v23h-23z" fill="#e4e4e4" stroke="#222"/><text x="3" y="12" class="glyph-x">abc</text><path d="M8 15l-3 3 3 3M13 15l3 3-3 3" fill="none" stroke="#111"/><use href="#badge" x="15" y="15" width="11" height="11"/></svg></i>
<i class="x"><svg viewBox="0 0 26 26"><use href="#xd" width="26" height="26"/><use href="#badge" x="15" y="15" width="11" height="11"/></svg></i>
<u class="xs"></u>
<i class="x"><svg viewBox="0 0 26 26"><path d="M1.500 1.500h23v23h-23z" fill="#e4e4e4" stroke="#222"/><text x="4" y="12" class="glyph-x">xml</text><path d="M8 15l-3 3 3 3M13 15l3 3-3 3" fill="none" stroke="#111"/><use href="#xdel" x="15" y="15" width="11" height="11"/></svg></i>
<u class="xs"></u>
<i class="x"><svg><use href="#un"/></svg></i>
<i class="x"><svg><use href="#in"/></svg></i>
<em class="arr xarr"></em>
</div>
<div class="tree">
<div class="n l0"><em class="tri"></em>&lt;svg:svg id="svg5"&gt;</div>
<div class="n l1">&lt;svg:defs id="defs9"&gt;</div>
<div class="n l1">&lt;sodipodi:namedview id="namedview7"&gt;</div>
<div class="n l1a"><em class="tri"></em>&lt;svg:g id="background"&gt;</div>
<div class="n l2">&lt;svg:image id="main-background"&gt;</div>
<div class="n l2a"><em class="tri"></em>&lt;svg:g id="light-overlays"&gt;</div>
<div class="n l3 sel-n">&lt;svg:image id="light_overlay.wc_main"&gt;</div>
</div>
<p class="hint">Csomópontok kijelölése: <b>kattintással</b>. Átrendezés: <b>húzással</b>.</p>
<div class="dbl"></div>
<div class="ahd"><span class="c0"><svg><use href="#pl"/></svg></span><span class="c1">Név</span><span class="c2">Érték</span></div>
<div class="ar"><svg><use href="#del"/></svg><span>xlink:href</span><span>file:///D:/ment/floorplan/floo...</span></div>
<div class="ar"><svg><use href="#del"/></svg><span>preserveAspectRatio</span><span>none</span></div>
<div class="ar"><svg><use href="#del"/></svg><span>href</span><span>/local/floorplan/floorplan_00...</span></div>
<div class="ar"><svg><use href="#del"/></svg><span>height</span><span>1200</span></div>
<div class="ar"><svg><use href="#del"/></svg><span>width</span><span>1523</span></div>
<div class="ar"><svg><use href="#del"/></svg><span>x</span><span>500</span></div>
<div class="ar"><svg><use href="#del"/></svg><span>id</span><span>light_overlay.wc_main</span></div>
<div class="fl"></div>
<p class="hint2">Egy tulajdonság szerkesztéséhez <b>kattintson</b> rá arra.</p>
<div class="tog"><span>Tulajdonságok megjelenítése</span><em class="swt"><s></s></em><span class="fl"></span>
<div class="lay"><i class="lo on"><svg viewBox="0 0 18 18"><path d="M2.500 2.500h13v13h-13z" fill="#ddd" stroke="#555"/><path d="M2 9h14v7H2z"/></svg></i><i class="lo"><svg viewBox="0 0 18 18"><path d="M2.500 2.500h13v13h-13z" fill="#ddd" stroke="#555"/><path d="M2 2h7v14H2z"/></svg></i></div>
</div>
</section>

<aside class="rt-bar">
<i class="t on"><svg><use href="#s-main"/></svg></i><u class="hs hs1"></u>
<i class="t"><svg><use href="#s-main"/></svg></i><i class="t"><svg><use href="#s-f1"/></svg></i><i class="t"><svg><use href="#s-f2"/></svg></i><i class="t"><svg><use href="#s-f3"/></svg></i><i class="t"><svg><use href="#s-f4"/></svg></i><u class="hs"></u>
<i class="t on"><svg><use href="#s-main"/></svg></i><i class="t"><svg><use href="#s-p"/></svg></i><i class="t"><svg><use href="#s-x"/></svg></i><i class="t on"><svg><use href="#s-c"/></svg></i><i class="t"><svg><use href="#s-b"/></svg></i><i class="t"><svg><use href="#s-r"/></svg></i><u class="hs"></u>
<i class="t on"><svg><use href="#s-main"/></svg></i><i class="t"><svg><use href="#s-pg"/></svg></i><i class="t"><svg><use href="#s-gd"/></svg></i><i class="t"><svg class="tall2" viewBox="0 -3 24 30"><text x="4" y="19" class="glyph-s">A</text><circle cx="3.500" cy="19" r="2.300" fill="#58b05f" stroke="#177a2c"/></svg></i><u class="hs"></u>
<i class="t"><svg><use href="#s-page"/></svg></i><i class="t on"><svg><use href="#s-grid"/></svg></i><i class="t on"><svg><use href="#s-guide"/></svg></i>
</aside>
</main>

<div class="pal">
<div class="none"><svg viewBox="0 0 19 19"><path d="M0 0l19 19M19 0 0 19" stroke="#8b1a1a" stroke-width="1.600"/></svg></div>
<div class="sw-row">
<s class="c-000000"></s><s class="c-1a1a1a"></s><s class="c-333333"></s><s class="c-4d4d4d"></s><s class="c-666666"></s><s class="c-808080"></s><s class="c-999999"></s><s class="c-b3b3b3"></s><s class="c-cccccc"></s><s class="c-e6e6e6"></s><s class="c-ececec"></s><s class="c-f2f2f2"></s><s class="c-f9f9f9"></s><s class="c-ffffff"></s>
<s class="c-800000"></s><s class="c-ff0000"></s><s class="c-808000"></s><s class="c-ffff00"></s><s class="c-008000"></s><s class="c-00ff00"></s><s class="c-008080"></s><s class="c-00ffff"></s><s class="c-000080"></s><s class="c-0000ff"></s><s class="c-800080"></s><s class="c-ff00ff"></s>
<s class="c-2b0000"></s><s class="c-550000"></s><s class="c-800000"></s><s class="c-aa0000"></s><s class="c-d40000"></s><s class="c-ff0000"></s><s class="c-ff2a2a"></s><s class="c-ff5555"></s><s class="c-ff8080"></s><s class="c-ffaaaa"></s><s class="c-ffd5d5"></s>
<s class="c-280b0b"></s><s class="c-501616"></s><s class="c-782121"></s><s class="c-a02c2c"></s><s class="c-c83737"></s><s class="c-d35f5f"></s><s class="c-de8787"></s><s class="c-e9afaf"></s><s class="c-f4d7d7"></s>
<s class="c-241c1c"></s><s class="c-483737"></s><s class="c-6c5353"></s><s class="c-916f6f"></s><s class="c-ac9393"></s><s class="c-c8b7b7"></s><s class="c-e3dbdb"></s>
<s class="c-2b1100"></s><s class="c-552200"></s><s class="c-803300"></s><s class="c-aa4400"></s><s class="c-d45500"></s><s class="c-ff6600"></s><s class="c-ff7f2a"></s><s class="c-ff9955"></s><s class="c-ffb380"></s><s class="c-ffccaa"></s><s class="c-ffe6d5"></s><s class="c-28170b"></s>
</div>
<em class="parr"></em>
</div>
<div class="psb"><em></em></div>

<footer class="st">
<div class="fsg">
<span class="k">Kitöltés:</span><b>Definiálatlan</b><span></span>
<span class="k">Körvonal:</span><b>Definiálatlan</b><span>1,00</span>
</div>
<label class="lb a-l">Á:</label><div class="spin sa"><span class="v">100</span><b class="m">−</b><b class="p fa">+</b></div>
<u class="vsep"></u>
<i class="sb"><svg><use href="#eye"/></svg></i><i class="sb"><svg><use href="#lock"/></svg></i>
<div class="sel lys"><span>•#light-overlays</span><em class="arr"></em></div>
<div class="msg"><div><b>Kép</b> 1523 × 1200: file:///D:/ment/floorplan/floorplan_001.png itt: <b class="bi">#light-overlays</b> réteg.</div><div class="m2">Átváltás a méretezés és forgatás fogantyúi között a kijelölésen való újbóli kattintással.</div></div>
<u class="vsep vs2"></u>
<div class="xy"><span>X:</span><span>2343,25</span><span>Y:</span><span>1742,42</span></div>
<label class="lb n-l">N:</label><div class="spin sn"><span class="v ctr">15%</span><b class="m">−</b><b class="p">+</b></div>
<label class="lb r-l">R:</label><div class="spin sr"><span class="v ctr">0,00°</span><b class="m">−</b><b class="p">+</b></div>
</footer>
</div>
</body>
</html>
```
FILE: styles.css
```css
*{box-sizing:border-box}
html,body{margin:0;padding:0}
body{width:1280px;height:1040px;overflow:hidden;background:#f5f4f2;font:12px/16px Roboto,"Liberation Sans",sans-serif;color:#2e3436}
.defs{position:absolute;width:0;height:0}
i,em,u,s{font-style:normal;text-decoration:none}
.app{width:1280px;height:1040px;border:1px solid #0f4f6e;border-top:0;border-right-width:2px;display:flex;flex-direction:column;overflow:hidden}
svg{display:block}
.edge{height:1px;background:#0f4f6e;flex:none;display:flex;justify-content:flex-end;margin-right:-2px}
.e1{width:47px;background:#4a9fe8}
.e2{width:73px;background:#dcdcdc}
.title{height:30px;background:#fff;display:flex;align-items:center;color:#111;padding-left:7px;flex:none}
.logo{width:17px;height:17px}
.ttext{margin-left:5px;font-size:12px}
.wctl{margin-left:auto;display:flex;margin-right:-1px}
.wc{width:46px;height:30px}
.menu{height:24px;flex:none;display:grid;grid-template-columns:33px 74px 46px 46px 68px 57px 53px 51px 85px 40px;align-items:center;padding-left:8px;border-bottom:1px solid #d5d2cd;color:#2e3436;white-space:nowrap}
.menu span:nth-child(2){letter-spacing:-.55px}
.menu span:nth-child(3){letter-spacing:-.4px}
.menu span:nth-child(4){letter-spacing:-.2px}
.menu span:nth-child(7),.menu span:nth-child(8){letter-spacing:-.33px}
.menu span:nth-child(9){letter-spacing:-.36px}
.tb{display:flex;align-items:center;flex:none;padding-left:4px}
.tb1{height:43px}
.tb2{height:40px;padding-bottom:1px}
.b{width:37px;height:34px;display:flex;align-items:center;justify-content:center;border-radius:5px;flex:none}
.b svg{width:22px;height:22px}
.b.on{background:#d3cfca}
.bigt{font:700 26px/24px "Liberation Serif",serif;color:#111}
.sep{width:1px;height:34px;background:#dedbd7;margin:0 7px 0 6px;flex:none}
.sep2{margin-right:7px}
.sep3{margin-right:10px}
.sep4{margin:0 7px}
.lb{color:#73787c;padding-right:3px;margin-left:8px}
.lbx{margin-left:0}
.lbs{padding-right:1px;letter-spacing:-.3px}
.spin{height:34px;background:#fff;border:1px solid #cdc7c2;border-radius:5px;display:flex;align-items:stretch;flex:none}
.spin .v{flex:1;padding-left:2px;line-height:32px;color:#111}
.spin b{width:16px;font:500 20px/30px "Liberation Sans",sans-serif;text-align:center;border-left:1px solid #ecebe9;color:#444}
.spin b.p{width:17px}
.fa{color:#d8d8d8!important}
.sx{width:105px}
.swd{width:100px}
.blk{width:30px;margin-left:8px;margin-right:-8px}
.lbm{margin-left:16px}
.sel{display:flex;align-items:center;justify-content:space-between;border:1px solid #cdc7c2;border-radius:5px;background:linear-gradient(#f6f5f4,#eceae7);box-shadow:0 1px 1px #d9d6d2;flex:none}
.arr{width:0;height:0;border-left:6px solid transparent;border-right:6px solid transparent;border-top:6px solid #333;flex:none}
.pxs{width:59px;height:34px;margin-left:5px;padding:0 9px 0 11px}
.af{width:36px;margin-right:1px}
.main{flex:1;display:flex;min-height:0}
.lt{width:53px;flex:none;display:flex;flex-direction:column;align-items:center;padding-top:5px}
.t{width:43px;height:34px;flex:none;display:flex;align-items:center;justify-content:center;border-radius:5px}
.t svg{width:24px;height:24px}
.t svg.tall{height:32px}
.t.on{background:#d3cfca}
.hs{width:43px;height:1px;background:#dedbd7;margin:6.500px 0 6.500px;flex:none}
.glyph-a{font:700 26px "Liberation Sans",sans-serif;fill:#111}
.glyph-s{font:700 21px "Liberation Sans",sans-serif;fill:#111}
.glyph-abc{font:9.500px "Liberation Sans",sans-serif;fill:#444}
.dk{fill:#111}
.glyph-x{font:10.500px "Liberation Sans",sans-serif;fill:#111}
.cv{width:434px;flex:none;display:grid;grid-template-columns:18px 400px 16px;grid-template-rows:25px 778px 26px;margin-top:1px;align-self:start}
.lockb{display:flex;align-items:center;justify-content:center;border-radius:0 0 5px 5px;background:#eee;border:1px solid #dedbd7}
.lockb svg{width:15px;height:15px}
.rh{width:400px;height:25px}
.rv{width:18px;height:778px}
.rt{font:9.500px "Liberation Sans",sans-serif;fill:#555}
.vt text{text-anchor:middle}
.cms{margin:2px 0 2px;background:#eeecea;border:1px solid #d4d1cc;border-radius:4px;display:flex;align-items:center;justify-content:center;font-size:11px;line-height:10px;color:#555}
.art{width:400px;height:778px;background:#fff}
.vs{background:#cdcdcd;padding:2px 4px}
.vs em{display:block;height:100%;background:#7f8383;border-radius:4px}
.gutter{background:#f5f4f2}
.hsb{background:#cdcdcd;padding:9px 0 0 126px}
.hsb em{display:block;width:154px;height:8px;background:#7f8383;border-radius:4px}
.cmg{background:#f0eeec;border:1px solid #d4d1cc;border-radius:0 0 4px 4px;margin-bottom:2px;padding:2px 0}
.cmg svg{width:14px;height:20px}
.gp{width:13px;flex:none;display:flex;flex-direction:column;align-items:center;justify-content:center;gap:2px}
.gp span{width:3px;height:3px;border-radius:2px;background:#555}
.g2{width:12px;padding-right:2px}
.panel{margin:17px 0;border:1px solid #cdc7c2;flex:none;background:#fff;display:flex;flex-direction:column}
.p1{width:382px}
.p2{width:324px}
.fl{flex:1}
.tabs{height:37px;flex:none;background:#e0dcd9;display:flex;border-bottom:1px solid #cdc7c2}
.tabs svg{width:20px;height:20px}
.tabs svg.s24{width:20px;height:20px;margin-right:1px}
.tabs svg.xic{width:12px;height:12px;margin:0}
.tab{display:flex;align-items:center;justify-content:center;color:#2e3436}
.tab.act{background:#efedeb;border-bottom:4px solid #3584e4;height:37px;padding:3px 0 0 9px;justify-content:flex-start}
.t1{width:73px}
.t2{width:125px}
.t3{width:75px}
.t4{width:50px}
.tx{margin-left:4px}
.tabs2{padding-left:9px}
.t5{width:142px;letter-spacing:-.2px}
.listf{height:605px;margin:1px 1px 0;border:1px solid #cdc7c2;background:#fff;flex:none;padding:0}
.hd{display:grid;grid-template-columns:29px 29px 29px 32px 29px 1fr;height:25px;border-bottom:1px solid #cdc7c2;color:#a0a0a0;font-weight:700}
.hd span{padding:4px 0 0 6px;border-right:1px solid #ddd}
.hd span:last-child{border:0}
.rw{display:grid;grid-template-columns:29px 29px 29px 32px 29px 1fr;height:32px;align-items:center;color:#111}
.rw>span{display:flex;justify-content:center;align-items:center}
.rw svg{width:22px;height:22px}
.rw svg.cb{width:10px;height:20px}
.rw>span.lbl{justify-content:flex-start;padding-top:1px}
.d0{padding-left:5px}
.d1{padding-left:23px}
.d2{padding-left:58px}
.d3{padding-left:40px}
.tri{width:0;height:0;border-left:6px solid transparent;border-right:6px solid transparent;border-top:6px solid #444;margin-right:6px;flex:none}
.sel-r{background:#3584e4;color:#fff}
.actions{height:37px;display:flex;align-items:center;padding:0 2px 0 0;flex:none}
.a{width:36px;height:24px;flex:none;display:flex;justify-content:center;align-items:center}
.a svg{width:20px;height:20px}
.a16 svg{width:16px;height:16px}
.a:first-child{margin-left:1px}
.blend{height:35px;flex:none;display:flex;align-items:center;justify-content:flex-end;padding-right:11px;color:#333}
.bl{margin-right:10px;letter-spacing:-.22px}
.ns{width:101px;height:34px;padding:0 11px 0 11px}
.ln{border:0;border-top:1px solid #e6e4e1;margin:8px 1px 8px;flex:none}
.slid{height:32px;flex:none;display:flex;align-items:center;margin:0 1px;color:#111}
.bar{width:312px;height:32px;display:flex;align-items:center;padding-left:4px;border-radius:0 3px 3px 0}
.s-off .bar{background:#e0dcd9;border:1px solid #cdc7c2;border-left:1px solid #1b6acb;color:#222}
.s-on .bar{background:#3584e4;border:1px solid #1b6acb;color:#fff;border-radius:0}
.num{width:32px;padding-left:2px}
.slid b{width:17px;height:100%;border-left:1px solid #ecebe9;font:500 20px/30px "Liberation Sans",sans-serif;text-align:center;color:#333}
.xtool{height:43px;flex:none;display:flex;align-items:center;padding-left:4px}
.x{width:37px;display:flex;justify-content:center}
.x svg{width:26px;height:26px;overflow:visible}
.xs{width:1px;height:34px;background:#dedbd7;margin:0 6px 0 7px;flex:none}
.xarr{margin-left:51px}
.tree{height:311px;margin:0 1px;border:1px solid #cdc7c2;padding:1px 0 0;flex:none;color:#111;letter-spacing:.08px}
.n{height:18px;display:flex;align-items:center;white-space:nowrap}
.n .tri{margin-right:6px}
.l0{padding-left:5px}
.l1{padding-left:41px}
.l1a{padding-left:23px}
.l2{padding-left:59px}
.l2a{padding-left:41px}
.l3{padding-left:77px}
.sel-n{background:#3584e4;color:#fff}
.hint{margin:0;height:18px;padding-left:2px;flex:none;font-size:11px;line-height:22px;color:#2e3436;white-space:nowrap}
.dbl{height:5px;margin:0 1px;border-top:1px solid #d5d2cd;border-bottom:1px solid #d5d2cd;flex:none}
.ahd{display:grid;grid-template-columns:30px 115px 1fr;height:26px;border-bottom:1px solid #ddd;margin:0 1px;flex:none;color:#a0a0a0;font-weight:700;align-items:center}
.ahd span{height:25px;display:flex;align-items:center;padding-left:6px;border-right:1px solid #ddd}
.ahd span:last-child{border:0}
.ahd svg{width:18px;height:18px}
.ar{height:26px;flex:none;display:grid;grid-template-columns:35px 115px 1fr;align-items:center;color:#111;white-space:nowrap}
.ar svg{width:24px;height:24px;margin-left:4px}
.ar span:nth-child(2){letter-spacing:-.2px}
.hint2{margin:0 0 1px 2px;font-size:11px;line-height:16px;white-space:nowrap;flex:none}
.tog{display:flex;align-items:center;height:28px;flex:none;padding-left:1px;font-size:11px}
.swt{width:38px;height:22px;margin-left:6px;background:#3584e4;border:1px solid #1b6acb;border-radius:11px;display:block;padding-left:16px}
.swt s{display:block;width:20px;height:20px;background:linear-gradient(#fff,#eee);border-radius:10px;border:1px solid #c8c4bf}
.lay{display:flex;width:52px;height:28px;border:1px solid #cdc7c2}
.lo{width:25px;display:flex;align-items:center;justify-content:center}
.lo.on{background:#d3cfca}
.lo svg{width:18px;height:18px}
.rt-bar{width:37px;margin-left:20px;flex:none;display:flex;flex-direction:column;padding-top:5px}
.rt-bar .t{width:37px;margin-bottom:1px}
.rt-bar .t svg{width:20px;height:20px}
.rt-bar .t svg.tall2{height:25px}
.rt-bar .hs{width:37px;margin:6.500px 0 7.500px}
.rt-bar .hs1{margin:5.500px 0 6.500px}
.pal{height:20px;flex:none;display:flex;padding-left:1px;margin-top:0}
.none{width:19px;height:19px;background:#fff;flex:none}
.none svg{width:19px;height:19px}
.sw-row{width:1222px;height:19px;display:flex;overflow:hidden;flex:none}
.sw-row s{width:19px;height:19px;flex:none}
.parr{margin-left:13px;margin-top:9px;width:0;height:0;border-top:5px solid transparent;border-bottom:5px solid transparent;border-right:6px solid #333}
.psb{height:14px;width:1240px;margin-left:1px;background:#cdcdcd;padding:3px 0 0 3px;flex:none}
.psb em{display:block;width:181px;height:8px;background:#7f8383;border-radius:4px}
.st{height:35px;flex:none;display:flex;align-items:center;line-height:16px;color:#333}
.fsg{width:178px;display:grid;grid-template-columns:52px 84px 1fr;row-gap:1px;flex:none;padding-top:2px}
.fsg .k{text-align:right}
.fsg b{margin-left:16px;color:#222;white-space:nowrap}
.fsg span:last-child{margin-left:15px}
.a-l{margin-left:4px;padding-right:1px}
.sa{width:67px;margin:0}
.sa,.sn,.sr,.lys{height:34px;margin-top:1px}
.vsep{width:1px;height:30px;background:#dedbd7;margin-left:4px;flex:none}
.sb{width:36px;display:flex;justify-content:center;flex:none}
.sb svg{width:22px;height:22px}
.lys{width:119px;margin-left:1px;padding:0 10px 0 19px;font-size:10px;font-weight:700;font-style:italic;white-space:nowrap}
.msg{width:478px;margin-left:20px;flex:none;white-space:nowrap;color:#333}
.m2{letter-spacing:-.17px}
.bi{font-style:italic;font-family:"Liberation Serif",serif;font-size:13px}
.vs2{height:35px;margin-left:0}
.xy{width:60px;margin-left:9px;display:grid;grid-template-columns:20px 1fr;flex:none;color:#444;letter-spacing:-.4px}
.n-l{margin-left:8px;padding-right:11px}
.sn{width:87px}
.r-l{margin-left:11px;padding-right:8px}
.sr{width:93px}
.ctr{text-align:center;padding-left:0}
.c-000000{background:#000}.c-1a1a1a{background:#1a1a1a}.c-333333{background:#333}.c-4d4d4d{background:#4d4d4d}.c-666666{background:#666}.c-808080{background:#808080}.c-999999{background:#999}.c-b3b3b3{background:#b3b3b3}.c-cccccc{background:#ccc}.c-e6e6e6{background:#e6e6e6}.c-ececec{background:#ececec}.c-f2f2f2{background:#f2f2f2}.c-f9f9f9{background:#f9f9f9}.c-ffffff{background:#fff}
.c-800000{background:#800000}.c-ff0000{background:#f00}.c-808000{background:#808000}.c-ffff00{background:#ff0}.c-008000{background:#008000}.c-00ff00{background:#0f0}.c-008080{background:#008080}.c-00ffff{background:#0ff}.c-000080{background:#000080}.c-0000ff{background:#00f}.c-800080{background:#800080}.c-ff00ff{background:#f0f}
.c-2b0000{background:#2b0000}.c-550000{background:#500}.c-aa0000{background:#a00}.c-d40000{background:#d40000}.c-ff2a2a{background:#ff2a2a}.c-ff5555{background:#f55}.c-ff8080{background:#ff8080}.c-ffaaaa{background:#faa}.c-ffd5d5{background:#ffd5d5}
.c-280b0b{background:#280b0b}.c-501616{background:#501616}.c-782121{background:#782121}.c-a02c2c{background:#a02c2c}.c-c83737{background:#c83737}.c-d35f5f{background:#d35f5f}.c-de8787{background:#de8787}.c-e9afaf{background:#e9afaf}.c-f4d7d7{background:#f4d7d7}
.c-241c1c{background:#241c1c}.c-483737{background:#483737}.c-6c5353{background:#6c5353}.c-916f6f{background:#916f6f}.c-ac9393{background:#ac9393}.c-c8b7b7{background:#c8b7b7}.c-e3dbdb{background:#e3dbdb}
.c-2b1100{background:#2b1100}.c-552200{background:#520}.c-803300{background:#803300}.c-aa4400{background:#a40}.c-d45500{background:#d45500}.c-ff6600{background:#f60}.c-ff7f2a{background:#ff7f2a}.c-ff9955{background:#f95}.c-ffb380{background:#ffb380}.c-ffccaa{background:#fca}.c-ffe6d5{background:#ffe6d5}.c-28170b{background:#28170b}
```
